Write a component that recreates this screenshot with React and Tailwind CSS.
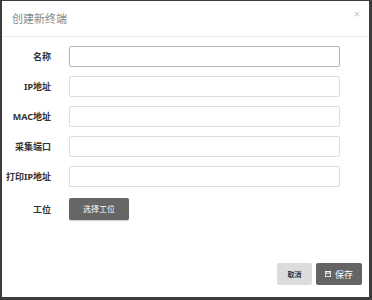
export default function App() {
  const fields = ['名称', 'IP地址', 'MAC地址', '采集端口', '打印IP地址']

  return (
    <div
      className="w-[372px] h-[300px] bg-white flex flex-col border-l-2 border-r-[3px] border-t border-b-[3px] border-[#3c3c3c] overflow-hidden"
      style={{ fontFamily: '"Noto Sans", "Noto Sans CJK SC", sans-serif' }}
    >
      {/* Header */}
      <div className="relative h-[36px] shrink-0 flex items-center pl-[10px] border-b border-[#ececec]">
        <span className="text-[11px] text-[#8a8a8a] leading-none">创建新终端</span>
        <span className="absolute right-[9px] top-[7px] text-[11px] leading-none text-[#c8c8c8]">×</span>
      </div>

      {/* Body */}
      <div className="flex flex-col gap-[9px] pt-[9px] pr-[29px]">
        {fields.map((label, i) => (
          <div key={label} className="flex items-center h-[21px]">
            <div className="w-[49px] shrink-0 text-right text-[9px] font-bold text-[#333] leading-none">
              {label}
            </div>
            <div
              className={
                'ml-[18px] flex-1 h-[21px] rounded-[2px] bg-white border ' +
                (i === 0 ? 'border-[#b4b4b4]' : 'border-[#dedede]')
              }
            />
          </div>
        ))}
        <div className="flex items-center h-[22px] mt-[2px]">
          <div className="w-[49px] shrink-0 text-right text-[9px] font-bold text-[#333] leading-none">
            工位
          </div>
          <button className="ml-[18px] w-[60px] h-[22px] rounded-[2px] bg-[#666] text-white text-[8px] leading-none shadow-[0_1px_1px_rgba(0,0,0,0.2)]">
            选择工位
          </button>
        </div>
      </div>

      <div className="flex-1" />

      {/* Footer */}
      <div className="flex justify-end gap-[4px] pr-[7px] pb-[12px]">
        <button className="w-[35px] h-[22px] rounded-[2px] bg-[#dcdcdc] text-[#333] text-[7px] font-bold leading-none">
          取消
        </button>
        <button className="w-[46px] h-[22px] rounded-[2px] bg-[#646464] text-white text-[9px] leading-none flex items-center justify-center gap-[4px]">
          <svg viewBox="0 0 8 8" className="w-[6px] h-[6px]" fill="none" stroke="#fff" strokeWidth="1">
            <rect x="0.5" y="0.5" width="7" height="7" />
            <rect x="2" y="0.5" width="4" height="2.5" />
          </svg>
          <span>保存</span>
        </button>
      </div>
    </div>
  )
}
